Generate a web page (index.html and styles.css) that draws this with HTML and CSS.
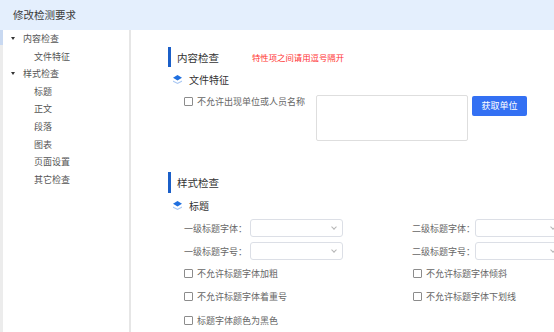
FILE: index.html
```html
<!DOCTYPE html>
<html lang="zh">
<head>
<meta charset="utf-8">
<title>修改检测要求</title>
<link rel="stylesheet" href="styles.css">
</head>
<body>
<div class="page">
  <div class="header">修改检测要求</div>
  <div class="body">
    <div class="strip"></div>
    <div class="sidebar">
      <div class="node"><span class="caret"></span>内容检查</div>
      <div class="leaf">文件特征</div>
      <div class="node"><span class="caret"></span>样式检查</div>
      <div class="leaf">标题</div>
      <div class="leaf">正文</div>
      <div class="leaf">段落</div>
      <div class="leaf">图表</div>
      <div class="leaf">页面设置</div>
      <div class="leaf">其它检查</div>
    </div>
    <div class="main">
      <div class="section">
        <div class="sec-title"><span class="sec-name">内容检查</span><span class="hint">特性项之间请用逗号隔开</span></div>
        <div class="sub">
          <svg class="dia" viewBox="0 0 10 10" width="9" height="9"><polygon points="0,6 5,8.6 10,6 10,7.4 5,10 0,7.4" fill="#a9c8f3"/><polygon points="5,0 10,3 5,6 0,3" fill="#1f6fdf"/></svg>
          <span>文件特征</span>
        </div>
        <div class="unit-row">
          <div class="check unit-label"><span class="box"></span>不允许出现单位或人员名称</div>
          <div class="textarea"></div>
          <div class="btn">获取单位</div>
        </div>
      </div>
      <div class="section s2">
        <div class="sec-title"><span class="sec-name">样式检查</span></div>
        <div class="sub">
          <svg class="dia" viewBox="0 0 10 10" width="9" height="9"><polygon points="0,6 5,8.6 10,6 10,7.4 5,10 0,7.4" fill="#a9c8f3"/><polygon points="5,0 10,3 5,6 0,3" fill="#1f6fdf"/></svg>
          <span>标题</span>
        </div>
        <div class="fields">
          <div class="field"><span class="flabel">一级标题字体：</span><div class="select"><span class="chev"></span></div></div>
          <div class="field"><span class="flabel">二级标题字体：</span><div class="select"><span class="chev"></span></div></div>
          <div class="field"><span class="flabel">一级标题字号：</span><div class="select"><span class="chev"></span></div></div>
          <div class="field"><span class="flabel">二级标题字号：</span><div class="select"><span class="chev"></span></div></div>
        </div>
        <div class="checks">
          <div class="check"><span class="box"></span>不允许标题字体加粗</div>
          <div class="check"><span class="box"></span>不允许标题字体倾斜</div>
          <div class="check"><span class="box"></span>不允许标题字体着重号</div>
          <div class="check"><span class="box"></span>不允许标题字体下划线</div>
          <div class="check"><span class="box"></span>标题字体颜色为黑色</div>
        </div>
      </div>
    </div>
  </div>
</div>
</body>
</html>
```

FILE: styles.css
```css
* { box-sizing: border-box; }
html, body { margin: 0; padding: 0; }
body {
  font-family: "Noto Sans CJK SC", "Noto Sans", sans-serif;
  background: #fff;
  color: #333;
}
.page { width: 554px; height: 332px; overflow: hidden; }
.header {
  height: 30px;
  background: #e4effd;
  padding-left: 13px;
  font-size: 10.5px;
  line-height: 30px;
  color: #3a3a3a;
}
.body { display: flex; height: 302px; }
.strip {
  width: 3px;
  background: linear-gradient(to bottom, #c9d9f1 0, #c9d9f1 15px, #ececec 15px);
  flex: none;
}
.sidebar {
  width: 128px;
  flex: none;
  border-right: 2px solid #e6e6e6;
  font-size: 9px;
  color: #555;
}
.node, .leaf { height: 17.6px; line-height: 17.6px; white-space: nowrap; }
.node { display: flex; align-items: center; padding-left: 8px; }
.caret {
  width: 0; height: 0;
  border-left: 2.5px solid transparent;
  border-right: 2.5px solid transparent;
  border-top: 3.5px solid #333;
  margin-right: 8px;
}
.leaf { padding-left: 31px; }
.main {
  flex: 1;
  overflow: hidden;
  padding: 17px 0 0 37px;
}
.sec-title {
  height: 20px;
  border-left: 3px solid #1b5fc8;
  display: flex;
  align-items: center;
  padding-left: 6px;
  white-space: nowrap;
}
.sec-name { font-size: 10.5px; color: #333; width: 75px; }
.hint { font-size: 8.4px; color: #ff3333; }
.sub {
  margin-top: 4px;
  height: 16px;
  display: flex;
  align-items: center;
  padding-left: 5px;
  font-size: 10px;
  color: #333;
}
.dia { margin-right: 7px; }
.check {
  display: flex;
  align-items: center;
  font-size: 9px;
  color: #666;
  white-space: nowrap;
}
.box {
  width: 9px; height: 9px;
  border: 1px solid #8c8c8c;
  border-radius: 1px;
  background: #fff;
  margin-right: 4px;
  flex: none;
}
.unit-row {
  margin-top: 8px;
  display: flex;
  align-items: flex-start;
  padding-left: 16px;
}
.unit-label { width: 132px; height: 12px; margin-top: 0; }
.textarea {
  width: 152px; height: 46px;
  border: 1px solid #dedede;
  border-radius: 2px;
  background: #fff;
}
.btn {
  margin-left: 4px;
  margin-top: 1px;
  width: 55px; height: 20px;
  background: #3370f3;
  border-radius: 2px;
  color: #fff;
  font-size: 9px;
  line-height: 20px;
  text-align: center;
}
.s2 { margin-top: 31px; }
.s2 .sec-title { height: 21px; }
.fields {
  margin-top: 6px;
  padding-left: 16px;
  display: grid;
  grid-template-columns: 228px 150px;
  row-gap: 5px;
}
.field { display: flex; align-items: center; height: 18px; }
.flabel { width: 66px; font-size: 9px; color: #666; white-space: nowrap; }
.select {
  width: 93px; height: 18px;
  border: 1px solid #dcdfe6;
  border-radius: 3px;
  position: relative;
  background: #fff;
}
.chev {
  position: absolute;
  right: 6px; top: 5px;
  width: 4px; height: 4px;
  border-right: 1px solid #b5b5b5;
  border-bottom: 1px solid #b5b5b5;
  transform: rotate(45deg);
}
.checks {
  margin-top: 1.5px;
  padding-left: 16px;
  display: grid;
  grid-template-columns: 229px 150px;
}
.checks .check { height: 23.5px; }
```
